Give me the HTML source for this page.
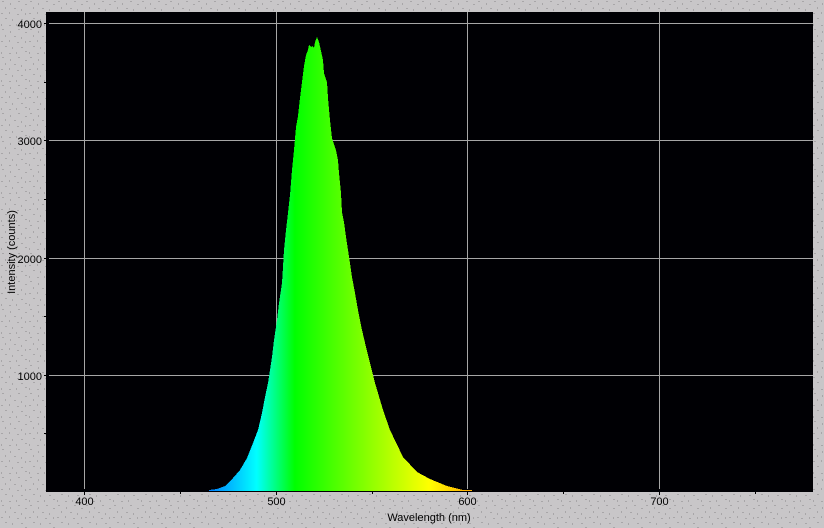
<!DOCTYPE html>
<html><head><meta charset="utf-8"><style>
html,body{margin:0;padding:0;width:824px;height:528px;overflow:hidden;background:#c8c6c8}
svg{display:block}
text{font-family:"Liberation Sans",sans-serif;font-size:11px;fill:#000}
</style></head><body>
<svg width="824" height="528" viewBox="0 0 824 528" xmlns="http://www.w3.org/2000/svg">
<defs>
<pattern id="d" width="28" height="28" patternUnits="userSpaceOnUse">
<rect width="28" height="28" fill="#c8c6c8"/>
<g fill="#a8a6a8">
<rect x="2" y="1" width="2" height="1"/><rect x="10" y="3" width="1" height="2"/><rect x="18" y="1" width="2" height="1"/><rect x="25" y="4" width="2" height="1"/>
<rect x="5" y="7" width="1" height="2"/><rect x="14" y="8" width="2" height="1"/><rect x="21" y="9" width="1" height="2"/>
<rect x="1" y="13" width="2" height="1"/><rect x="9" y="12" width="1" height="2"/><rect x="17" y="14" width="2" height="1"/><rect x="25" y="13" width="1" height="2"/>
<rect x="5" y="18" width="2" height="1"/><rect x="12" y="19" width="1" height="2"/><rect x="21" y="19" width="2" height="1"/>
<rect x="1" y="24" width="1" height="2"/><rect x="9" y="25" width="2" height="1"/><rect x="16" y="24" width="1" height="2"/><rect x="25" y="23" width="2" height="1"/>
</g>
</pattern>
<linearGradient id="s" gradientUnits="userSpaceOnUse" x1="161" y1="0" x2="468" y2="0">
<stop offset="0" stop-color="#0000ff"/>
<stop offset="0.312" stop-color="#00ffff"/>
<stop offset="0.436" stop-color="#00ff00"/>
<stop offset="0.873" stop-color="#ffff00"/>
<stop offset="1" stop-color="#ffb000"/>
</linearGradient>
</defs>
<rect width="824" height="528" fill="url(#d)"/>
<rect x="46" y="12" width="767" height="480" fill="#000004"/>
<g shape-rendering="crispEdges" fill="#a6a6a6">
<rect x="84" y="12" width="1" height="477"/><rect x="276" y="12" width="1" height="477"/><rect x="467" y="12" width="1" height="477"/><rect x="659" y="12" width="1" height="477"/>
<rect x="49" y="23" width="764" height="1"/><rect x="49" y="140" width="764" height="1"/><rect x="49" y="258" width="764" height="1"/><rect x="49" y="375" width="764" height="1"/>
</g>
<g shape-rendering="crispEdges" fill="#000">
<rect x="44" y="23" width="2" height="1"/><rect x="44" y="140" width="2" height="1"/><rect x="44" y="258" width="2" height="1"/><rect x="44" y="375" width="2" height="1"/>
<rect x="44" y="82" width="2" height="1"/><rect x="44" y="199" width="2" height="1"/><rect x="44" y="316" width="2" height="1"/><rect x="44" y="433" width="2" height="1"/>
<rect x="84" y="492" width="1" height="3"/><rect x="276" y="492" width="1" height="3"/><rect x="467" y="492" width="1" height="3"/><rect x="659" y="492" width="1" height="3"/>
<rect x="180" y="492" width="1" height="2"/><rect x="372" y="492" width="1" height="2"/><rect x="563" y="492" width="1" height="2"/><rect x="755" y="492" width="1" height="2"/>
</g>
<polygon shape-rendering="crispEdges" fill="url(#s)" points="209,491 209,490 217,489 225,486 233,478 240,470 247,458 253,443 258,430 262,413 265,397 268,383 270,370 272,357 274,340 277,320 279,303 282,283 283,267 284,250 286,230 288,213 290,195 292,170 294,150 296,127 298,116 300,98 302,82 304,66 306,55 308,50 309,45 311,47 312,46 314,48 315,42 317,37 319,42 321,51 323,60 324,73 327,82 328,98 330,120 332,138 336,150 338,160 339,173 341,193 342,212 344,222 346,237 348,250 350,263 352,277 355,293 358,310 362,330 366,347 370,363 375,383 378,393 383,410 390,430 403,457 417,472 430,479 447,486 463,490 472,490 472,491"/>
<g text-anchor="end">
<text x="42" y="28">4000</text><text x="42" y="145">3000</text><text x="42" y="263">2000</text><text x="42" y="380">1000</text>
</g>
<g text-anchor="middle">
<text x="84.500" y="505">400</text><text x="276.500" y="505">500</text><text x="467.500" y="505">600</text><text x="659.500" y="505">700</text>
<text x="429" y="521">Wavelength (nm)</text>
<text transform="translate(15,252) rotate(-90)">Intensity (counts)</text>
</g>
</svg>
</body></html>
